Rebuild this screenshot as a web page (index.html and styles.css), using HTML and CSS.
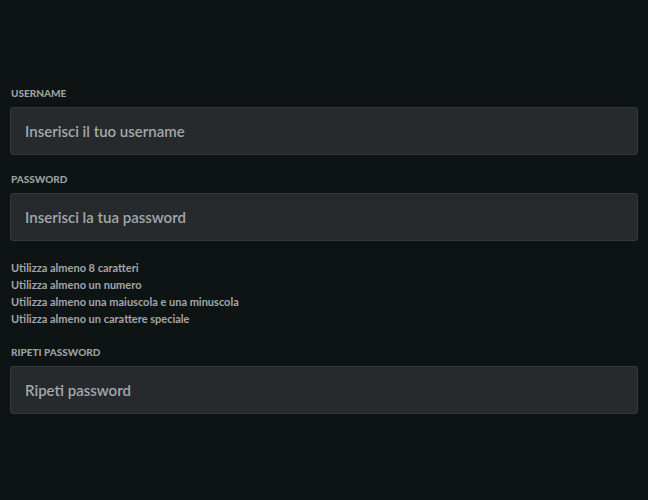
FILE: index.html
```html
<!DOCTYPE html>
<html lang="it">
<head>
<meta charset="utf-8">
<title>Registrazione</title>
<link rel="stylesheet" href="styles.css">
</head>
<body>
<form class="form">
  <div class="field">
    <label class="label" for="username">Username</label>
    <input class="input" id="username" type="text" placeholder="Inserisci il tuo username">
  </div>
  <div class="field">
    <label class="label" for="password">Password</label>
    <input class="input" id="password" type="password" placeholder="Inserisci la tua password">
  </div>
  <ul class="hints">
    <li>Utilizza almeno 8 caratteri</li>
    <li>Utilizza almeno un numero</li>
    <li>Utilizza almeno una maiuscola e una minuscola</li>
    <li>Utilizza almeno un carattere speciale</li>
  </ul>
  <div class="field">
    <label class="label" for="repeat">Ripeti password</label>
    <input class="input" id="repeat" type="password" placeholder="Ripeti password">
  </div>
</form>
</body>
</html>
```
FILE: styles.css
```css
html, body {
  margin: 0;
  padding: 0;
  background: #0e1314;
  height: 100%;
}
body {
  font-family: Lato, "Liberation Sans", sans-serif;
}
.form {
  display: flex;
  flex-direction: column;
  padding: 87px 10px 0 10px;
}
.field {
  display: flex;
  flex-direction: column;
  gap: 8px;
  margin-bottom: 18px;
}
.label {
  font-size: 10px;
  line-height: 12px;
  font-weight: 900;
  text-transform: uppercase;
  letter-spacing: 0;
  color: #9da1a3;
  padding-left: 1px;
}
.input {
  box-sizing: border-box;
  height: 48px;
  width: 100%;
  margin: 0;
  background: #262a2d;
  border: 1px solid #33383b;
  border-radius: 3px;
  padding: 0 14px;
  font-family: inherit;
  font-size: 15px;
  font-weight: 600;
  color: #c8cbcd;
  outline: none;
}
.input::placeholder {
  color: #a3a7aa;
  opacity: 1;
}
.hints {
  list-style: none;
  margin: 0 0 19px 0;
  padding: 0 0 0 1px;
  font-size: 11px;
  line-height: 17px;
  font-weight: 700;
  color: #a3a6a8;
}
```
